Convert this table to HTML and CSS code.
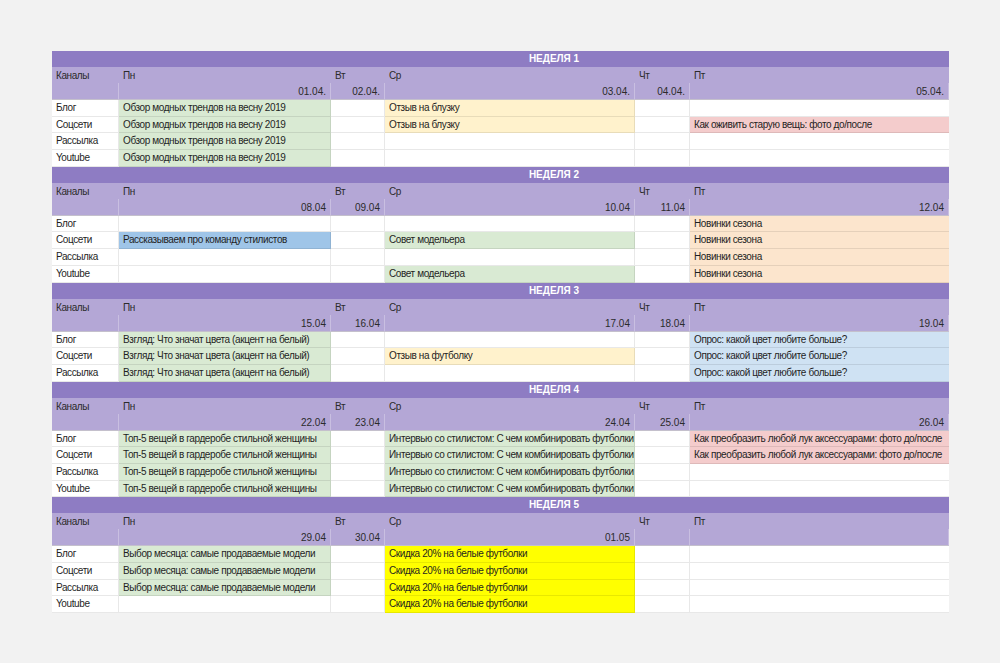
FILE: index.html
```html
<!DOCTYPE html>
<html lang="ru">
<head>
<meta charset="utf-8">
<title>Контент-план</title>
<link rel="stylesheet" href="styles.css">
</head>
<body>
<main class="sheet">

<section class="week">
  <div class="title">НЕДЕЛЯ 1</div>
  <div class="hd">Каналы</div><div class="hd">Пн</div><div class="hd">Вт</div><div class="hd">Ср</div><div class="hd">Чт</div><div class="hd">Пт</div>
  <div class="dt"></div><div class="dt">01.04.</div><div class="dt">02.04.</div><div class="dt">03.04.</div><div class="dt">04.04.</div><div class="dt">05.04.</div>

  <div class="c">Блог</div><div class="c green">Обзор модных трендов на весну 2019</div><div class="c"></div><div class="c cream">Отзыв на блузку</div><div class="c"></div><div class="c"></div>
  <div class="c">Соцсети</div><div class="c green">Обзор модных трендов на весну 2019</div><div class="c"></div><div class="c cream">Отзыв на блузку</div><div class="c"></div><div class="c pink">Как оживить старую вещь: фото до/после</div>
  <div class="c">Рассылка</div><div class="c green">Обзор модных трендов на весну 2019</div><div class="c"></div><div class="c"></div><div class="c"></div><div class="c"></div>
  <div class="c">Youtube</div><div class="c green">Обзор модных трендов на весну 2019</div><div class="c"></div><div class="c"></div><div class="c"></div><div class="c"></div>
</section>

<section class="week">
  <div class="title">НЕДЕЛЯ 2</div>
  <div class="hd">Каналы</div><div class="hd">Пн</div><div class="hd">Вт</div><div class="hd">Ср</div><div class="hd">Чт</div><div class="hd">Пт</div>
  <div class="dt"></div><div class="dt">08.04</div><div class="dt">09.04</div><div class="dt">10.04</div><div class="dt">11.04</div><div class="dt">12.04</div>

  <div class="c">Блог</div><div class="c"></div><div class="c"></div><div class="c"></div><div class="c"></div><div class="c peach">Новинки сезона</div>
  <div class="c">Соцсети</div><div class="c blue">Рассказываем про команду стилистов</div><div class="c"></div><div class="c green">Совет модельера</div><div class="c"></div><div class="c peach">Новинки сезона</div>
  <div class="c">Рассылка</div><div class="c"></div><div class="c"></div><div class="c"></div><div class="c"></div><div class="c peach">Новинки сезона</div>
  <div class="c">Youtube</div><div class="c"></div><div class="c"></div><div class="c green">Совет модельера</div><div class="c"></div><div class="c peach">Новинки сезона</div>
</section>

<section class="week">
  <div class="title">НЕДЕЛЯ 3</div>
  <div class="hd">Каналы</div><div class="hd">Пн</div><div class="hd">Вт</div><div class="hd">Ср</div><div class="hd">Чт</div><div class="hd">Пт</div>
  <div class="dt"></div><div class="dt">15.04</div><div class="dt">16.04</div><div class="dt">17.04</div><div class="dt">18.04</div><div class="dt">19.04</div>

  <div class="c">Блог</div><div class="c green">Взгляд: Что значат цвета (акцент на белый)</div><div class="c"></div><div class="c"></div><div class="c"></div><div class="c sky">Опрос: какой цвет любите больше?</div>
  <div class="c">Соцсети</div><div class="c green">Взгляд: Что значат цвета (акцент на белый)</div><div class="c"></div><div class="c cream">Отзыв на футболку</div><div class="c"></div><div class="c sky">Опрос: какой цвет любите больше?</div>
  <div class="c">Рассылка</div><div class="c green">Взгляд: Что значат цвета (акцент на белый)</div><div class="c"></div><div class="c"></div><div class="c"></div><div class="c sky">Опрос: какой цвет любите больше?</div>
</section>

<section class="week">
  <div class="title">НЕДЕЛЯ 4</div>
  <div class="hd">Каналы</div><div class="hd">Пн</div><div class="hd">Вт</div><div class="hd">Ср</div><div class="hd">Чт</div><div class="hd">Пт</div>
  <div class="dt"></div><div class="dt">22.04</div><div class="dt">23.04</div><div class="dt">24.04</div><div class="dt">25.04</div><div class="dt">26.04</div>

  <div class="c">Блог</div><div class="c green">Топ-5 вещей в гардеробе стильной женщины</div><div class="c"></div><div class="c green">Интервью со стилистом: С чем комбинировать футболки</div><div class="c"></div><div class="c pink">Как преобразить любой лук аксессуарами: фото до/после</div>
  <div class="c">Соцсети</div><div class="c green">Топ-5 вещей в гардеробе стильной женщины</div><div class="c"></div><div class="c green">Интервью со стилистом: С чем комбинировать футболки</div><div class="c"></div><div class="c pink">Как преобразить любой лук аксессуарами: фото до/после</div>
  <div class="c">Рассылка</div><div class="c green">Топ-5 вещей в гардеробе стильной женщины</div><div class="c"></div><div class="c green">Интервью со стилистом: С чем комбинировать футболки</div><div class="c"></div><div class="c"></div>
  <div class="c">Youtube</div><div class="c green">Топ-5 вещей в гардеробе стильной женщины</div><div class="c"></div><div class="c green">Интервью со стилистом: С чем комбинировать футболки</div><div class="c"></div><div class="c"></div>
</section>

<section class="week">
  <div class="title">НЕДЕЛЯ 5</div>
  <div class="hd">Каналы</div><div class="hd">Пн</div><div class="hd">Вт</div><div class="hd">Ср</div><div class="hd">Чт</div><div class="hd">Пт</div>
  <div class="dt"></div><div class="dt">29.04</div><div class="dt">30.04</div><div class="dt">01.05</div><div class="dt"></div><div class="dt"></div>

  <div class="c">Блог</div><div class="c green">Выбор месяца: самые продаваемые модели</div><div class="c"></div><div class="c yellow">Скидка 20% на белые футболки</div><div class="c"></div><div class="c"></div>
  <div class="c">Соцсети</div><div class="c green">Выбор месяца: самые продаваемые модели</div><div class="c"></div><div class="c yellow">Скидка 20% на белые футболки</div><div class="c"></div><div class="c"></div>
  <div class="c">Рассылка</div><div class="c green">Выбор месяца: самые продаваемые модели</div><div class="c"></div><div class="c yellow">Скидка 20% на белые футболки</div><div class="c"></div><div class="c"></div>
  <div class="c">Youtube</div><div class="c"></div><div class="c"></div><div class="c yellow">Скидка 20% на белые футболки</div><div class="c"></div><div class="c"></div>
</section>

</main>
</body>
</html>
```

FILE: styles.css
```css
html, body {
  margin: 0;
  padding: 0;
  background: #f2f2f2;
}

body {
  font-family: "Liberation Sans", Arial, sans-serif;
  font-size: 10px;
  letter-spacing: -0.4px;
  color: #222;
}

.sheet {
  width: 897px;
  margin: 51px 0 0 52px;
  background: #fff;
}

.week {
  display: grid;
  grid-template-columns: 67px 212px 54px 250px 55px 259px;
  grid-template-rows: 16px 16px 17px;
  grid-auto-rows: 16.7px;
}

.title {
  grid-column: 1 / -1;
  background: #8e7cc3;
  color: #fff;
  font-weight: bold;
  letter-spacing: 0;
  text-align: center;
  padding-left: 107px;
  line-height: 16px;
}

.hd,
.dt {
  background: #b4a7d6;
  color: #2b2b2b;
  padding: 0 4px;
  white-space: nowrap;
}

.hd {
  line-height: 15px;
  padding-top: 1px;
}

.dt {
  text-align: right;
  line-height: 17px;
  letter-spacing: 0;
  border-right: 1px solid rgba(255, 255, 255, 0.28);
  border-bottom: 1px solid #c4c0cc;
  box-sizing: border-box;
}

.dt:last-child {
  border-right: none;
}

.c {
  box-sizing: border-box;
  border-right: 1px solid rgba(0, 0, 0, 0.09);
  border-bottom: 1px solid rgba(0, 0, 0, 0.09);
  padding: 0 4px;
  line-height: 15px;
  white-space: nowrap;
  overflow: hidden;
  color: #1f1f1f;
}

.c:nth-child(6n + 13) {
  border-right: none;
}

.green  { background: #d9ead3; }
.cream  { background: #fff2cc; }
.pink   { background: #f4cccc; }
.blue   { background: #9fc5e8; }
.sky    { background: #cfe2f3; }
.peach  { background: #fce5cd; }
.yellow { background: #ffff00; }
```
